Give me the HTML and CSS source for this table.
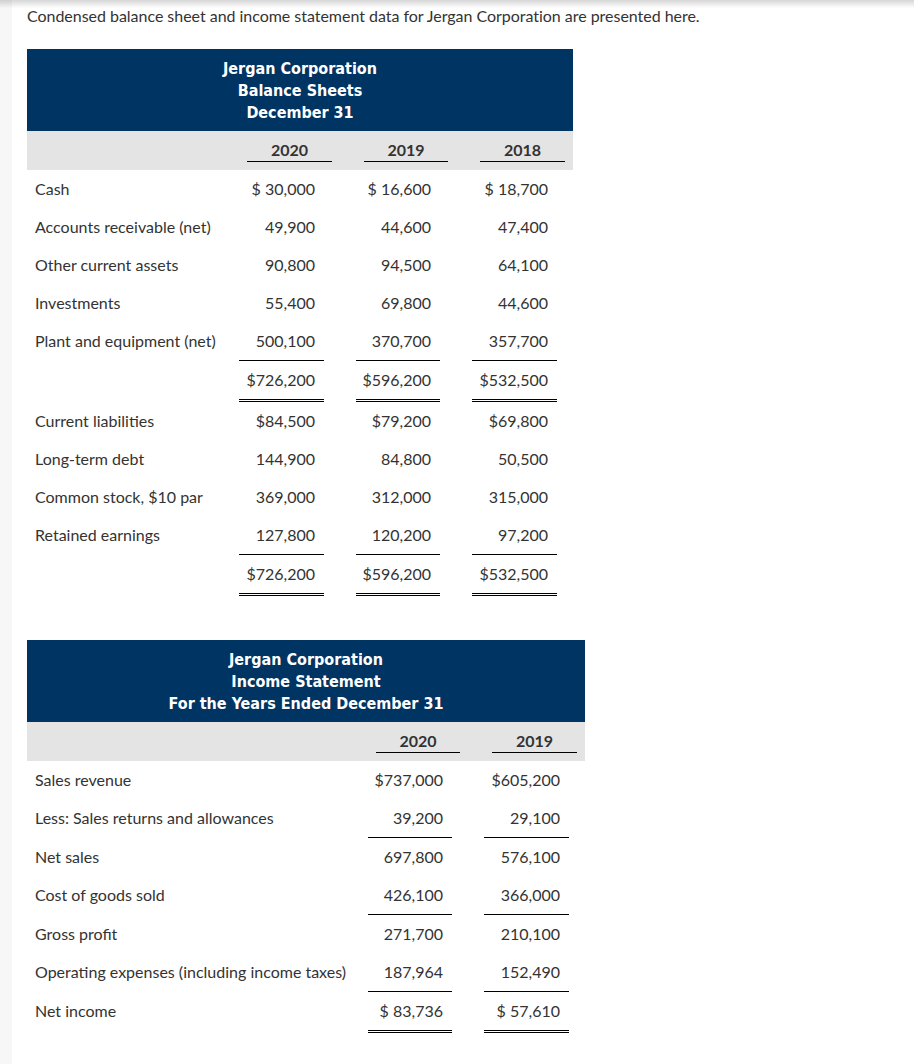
FILE: index.html
```html
<!DOCTYPE html>
<html lang="en">
<head>
<meta charset="utf-8">
<title>Jergan Corporation</title>
<link rel="stylesheet" href="styles.css">
</head>
<body>
<div class="page">
  <p class="intro">Condensed balance sheet and income statement data for Jergan Corporation are presented here.</p>

  <section class="statement bs">
    <div class="title">
      <div>Jergan Corporation</div>
      <div>Balance Sheets</div>
      <div>December 31</div>
    </div>
    <div class="grid thead">
      <div></div>
      <div class="yr"><span>2020</span></div>
      <div class="yr"><span>2019</span></div>
      <div class="yr"><span>2018</span></div>
    </div>
    <div class="grid tbody">
      <div class="lbl">Cash</div>
      <div class="val">$ 30,000</div><div class="val">$ 16,600</div><div class="val">$ 18,700</div>

      <div class="lbl">Accounts receivable (net)</div>
      <div class="val">49,900</div><div class="val">44,600</div><div class="val">47,400</div>

      <div class="lbl">Other current assets</div>
      <div class="val">90,800</div><div class="val">94,500</div><div class="val">64,100</div>

      <div class="lbl">Investments</div>
      <div class="val">55,400</div><div class="val">69,800</div><div class="val">44,600</div>

      <div class="lbl">Plant and equipment (net)</div>
      <div class="val line">500,100</div><div class="val line">370,700</div><div class="val line">357,700</div>

      <div class="lbl"></div>
      <div class="val dbl">$726,200</div><div class="val dbl">$596,200</div><div class="val dbl">$532,500</div>

      <div class="lbl">Current liabilities</div>
      <div class="val">$84,500</div><div class="val">$79,200</div><div class="val">$69,800</div>

      <div class="lbl">Long-term debt</div>
      <div class="val">144,900</div><div class="val">84,800</div><div class="val">50,500</div>

      <div class="lbl">Common stock, $10 par</div>
      <div class="val">369,000</div><div class="val">312,000</div><div class="val">315,000</div>

      <div class="lbl">Retained earnings</div>
      <div class="val line">127,800</div><div class="val line">120,200</div><div class="val line">97,200</div>

      <div class="lbl"></div>
      <div class="val dbl">$726,200</div><div class="val dbl">$596,200</div><div class="val dbl">$532,500</div>
    </div>
  </section>

  <section class="statement is">
    <div class="title">
      <div>Jergan Corporation</div>
      <div>Income Statement</div>
      <div>For the Years Ended December 31</div>
    </div>
    <div class="grid thead">
      <div></div>
      <div class="yr"><span>2020</span></div>
      <div class="yr"><span>2019</span></div>
    </div>
    <div class="grid tbody">
      <div class="lbl">Sales revenue</div>
      <div class="val">$737,000</div><div class="val">$605,200</div>

      <div class="lbl">Less: Sales returns and allowances</div>
      <div class="val line">39,200</div><div class="val line">29,100</div>

      <div class="lbl">Net sales</div>
      <div class="val">697,800</div><div class="val">576,100</div>

      <div class="lbl">Cost of goods sold</div>
      <div class="val line">426,100</div><div class="val line">366,000</div>

      <div class="lbl">Gross profit</div>
      <div class="val">271,700</div><div class="val">210,100</div>

      <div class="lbl">Operating expenses (including income taxes)</div>
      <div class="val line">187,964</div><div class="val line">152,490</div>

      <div class="lbl">Net income</div>
      <div class="val dbl">$ 83,736</div><div class="val dbl">$ 57,610</div>
    </div>
  </section>
</div>
</body>
</html>
```

FILE: styles.css
```css
html, body {
  margin: 0;
  padding: 0;
}

body {
  background: #f7f7f7;
  font-family: Lato, "Liberation Sans", sans-serif;
  color: #333;
  font-size: 16px;
}

.page {
  margin-left: 12px;
  min-height: 1064px;
  background: #fff;
  padding: 1px 0 0 15px;
  box-sizing: border-box;
}

body::before {
  content: "";
  position: fixed;
  left: 0;
  right: 0;
  top: 0;
  height: 8px;
  background: linear-gradient(to bottom, rgba(0, 0, 0, 0.16), rgba(0, 0, 0, 0));
  pointer-events: none;
}

.intro {
  margin: 5px 0 0 0;
  line-height: 20px;
  font-size: 16px;
  color: #333;
  letter-spacing: -0.03px;
}

.statement {
  margin-top: 23px;
}

.statement.is {
  margin-top: 44px;
}

.bs { width: 546px; }
.is { width: 558px; }

.title {
  background: #003462;
  color: #fff;
  font-family: "DejaVu Sans Condensed", "DejaVu Sans", sans-serif;
  font-stretch: condensed;
  font-weight: 700;
  font-size: 16px;
  line-height: 22px;
  text-align: center;
  padding: 9px 0 7px;
  height: 82px;
  box-sizing: border-box;
}

.grid {
  display: grid;
  column-gap: 32px;
  padding-right: 16px;
  align-items: start;
}

.bs .grid {
  grid-template-columns: 180px 85px 84px 85px;
}

.is .grid {
  grid-template-columns: 309px 84px 85px;
}

.thead {
  background: #e4e4e4;
  height: 39px;
  align-items: stretch;
}

.yr {
  display: flex;
  align-items: stretch;
}

.yr span {
  flex: 1;
  margin: 0 -8px 0 8px;
  display: flex;
  align-items: center;
  justify-content: center;
  font-weight: 700;
  height: 31px;
  box-sizing: border-box;
  border-bottom: 1px solid #000;
  padding-top: 7px;
  color: #333;
}

.tbody > div {
  display: flex;
  align-items: center;
  height: 36px;
  padding-bottom: 2px;
  white-space: nowrap;
}

.lbl {
  padding-left: 8px;
}

.val {
  justify-content: flex-end;
  padding-right: 9px;
}

.val.line {
  border-bottom: 1px solid #000;
}

.val.dbl {
  border-bottom: 3px double #000;
}
```
